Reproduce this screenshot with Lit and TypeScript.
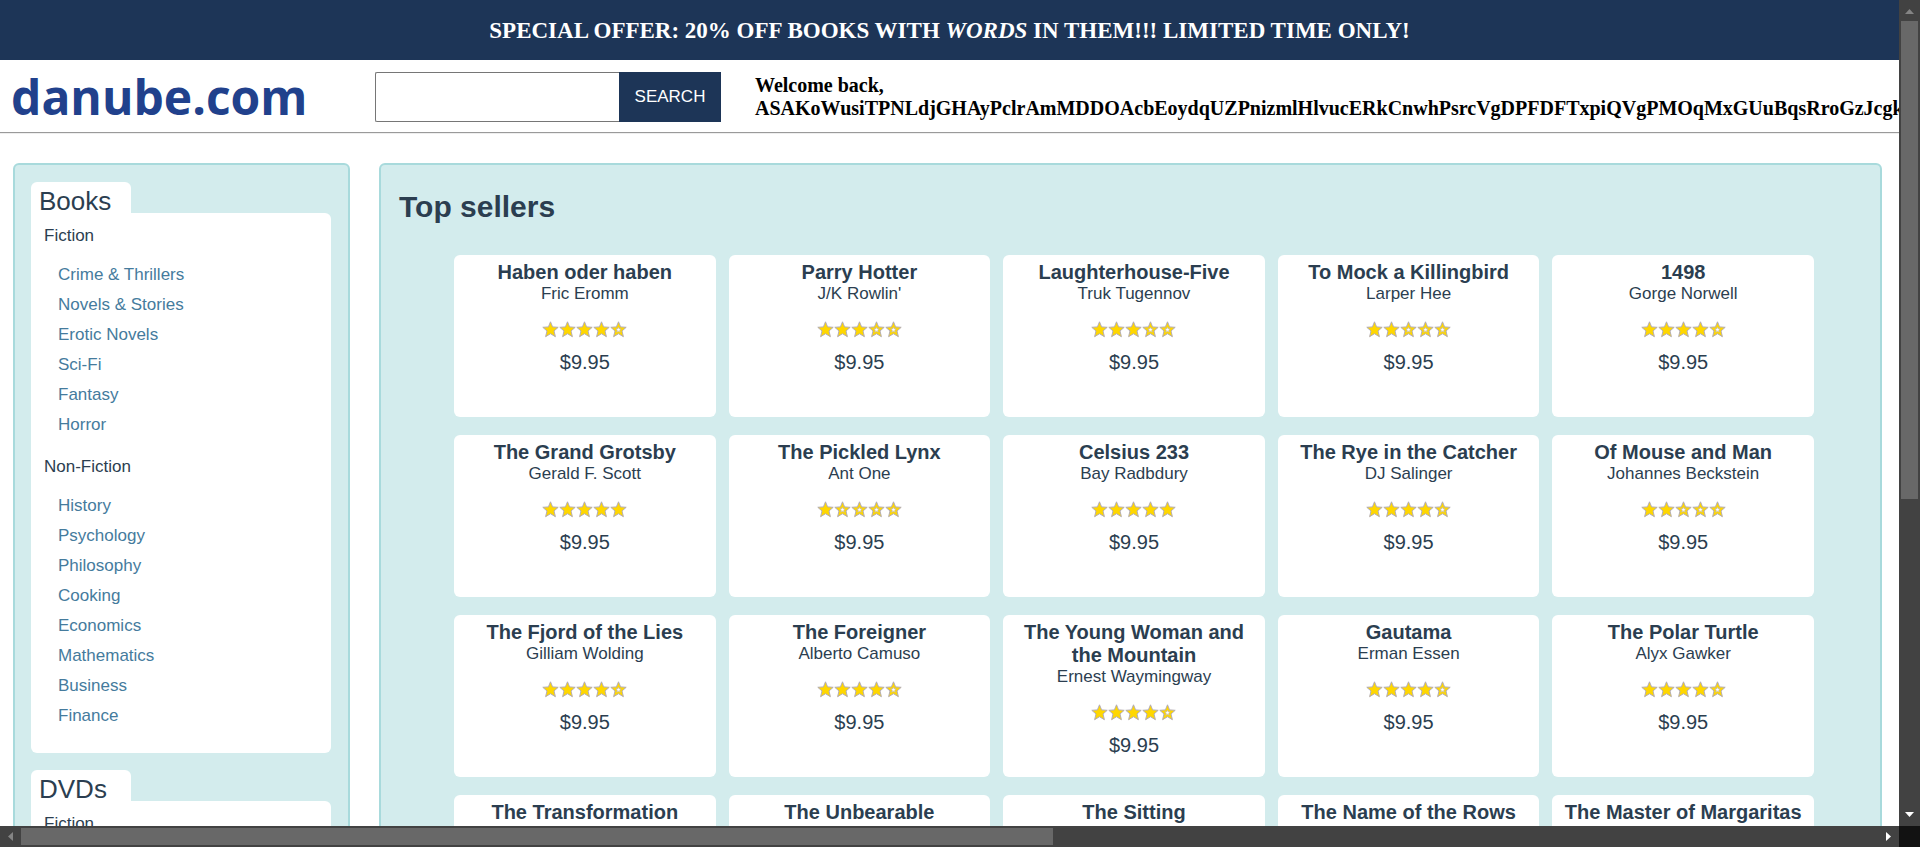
import { LitElement, html, css } from "lit";
import { customElement, property } from "lit/decorators.js";

interface Book {
  title: string;
  author: string;
  stars: number;
}

const BOOKS: Book[] = [
  { title: "Haben oder haben", author: "Fric Eromm", stars: 4 },
  { title: "Parry Hotter", author: "J/K Rowlin'", stars: 3 },
  { title: "Laughterhouse-Five", author: "Truk Tugennov", stars: 3 },
  { title: "To Mock a Killingbird", author: "Larper Hee", stars: 2 },
  { title: "1498", author: "Gorge Norwell", stars: 4 },
  { title: "The Grand Grotsby", author: "Gerald F. Scott", stars: 5 },
  { title: "The Pickled Lynx", author: "Ant One", stars: 1 },
  { title: "Celsius 233", author: "Bay Radbdury", stars: 5 },
  { title: "The Rye in the Catcher", author: "DJ Salinger", stars: 4 },
  { title: "Of Mouse and Man", author: "Johannes Beckstein", stars: 2 },
  { title: "The Fjord of the Lies", author: "Gilliam Wolding", stars: 4 },
  { title: "The Foreigner", author: "Alberto Camuso", stars: 4 },
  { title: "The Young Woman and the Mountain", author: "Ernest Waymingway", stars: 4 },
  { title: "Gautama", author: "Erman Essen", stars: 4 },
  { title: "The Polar Turtle", author: "Alyx Gawker", stars: 4 },
  { title: "The Transformation", author: "", stars: 0 },
  { title: "The Unbearable", author: "", stars: 0 },
  { title: "The Sitting", author: "", stars: 0 },
  { title: "The Name of the Rows", author: "", stars: 0 },
  { title: "The Master of Margaritas", author: "", stars: 0 },
];

const CATEGORIES = [
  {
    name: "Books",
    groups: [
      {
        name: "Fiction",
        items: ["Crime & Thrillers", "Novels & Stories", "Erotic Novels", "Sci-Fi", "Fantasy", "Horror"],
      },
      {
        name: "Non-Fiction",
        items: ["History", "Psychology", "Philosophy", "Cooking", "Economics", "Mathematics", "Business", "Finance"],
      },
    ],
  },
  { name: "DVDs", groups: [{ name: "Fiction", items: [] as string[] }] },
];

const STAR = "M8.5 0.8 L10.6 5.9 L16.2 6.3 L12 10 L13.4 15.7 L8.5 12.7 L3.6 15.7 L5 10 L0.8 6.3 L6.4 5.9 Z";
const HOLE = "M8.5 6 L9.3 7.8 L11.2 8 L9.8 9.3 L10.2 11.2 L8.5 10.2 L6.8 11.2 L7.2 9.3 L5.8 8 L7.7 7.8 Z";

@customElement("star-rating")
export class StarRating extends LitElement {
  @property({ type: Number }) value = 0;

  static styles = css`
    :host {
      display: flex;
      justify-content: center;
    }
    .star {
      display: block;
      width: 17px;
      height: 17px;
      flex: none;
    }
    .fill {
      fill: #ffd700;
      stroke: #b4adb4;
      stroke-width: 1;
    }
    .hole {
      fill: #fff;
      stroke: #c3b8a2;
      stroke-width: 0.8;
    }
  `;

  render() {
    return [0, 1, 2, 3, 4].map(
      (i) => html`<svg class="star" viewBox="0 0 17 17" aria-hidden="true">
        <path class="fill" d=${STAR} />
        <path class="hole" d=${i < this.value ? "" : HOLE} />
      </svg>`
    );
  }
}

@customElement("book-card")
export class BookCard extends LitElement {
  @property({ attribute: false }) book!: Book;

  static styles = css`
    :host {
      display: block;
      box-sizing: border-box;
      min-height: 162px;
      padding: 6px 10px 0;
      border-radius: 6px;
      background: #fff;
      text-align: center;
    }
    .title {
      margin: 0;
      font-size: 20px;
      line-height: 23px;
      font-weight: 700;
    }
    .author {
      margin: 0 0 17px;
      font-size: 17px;
      line-height: 20px;
    }
    .price {
      margin: 13px 0 0;
      font-size: 20px;
      line-height: 23px;
    }
  `;

  render() {
    const { title, author, stars } = this.book;
    return html`
      <h3 class="title">${title}</h3>
      ${author
        ? html`<p class="author">${author}</p>
            <star-rating .value=${stars}></star-rating>
            <p class="price">$9.95</p>`
        : null}
    `;
  }
}

@customElement("app-root")
export class AppRoot extends LitElement {
  static styles = css`
    :host {
      display: grid;
      grid-template: minmax(0, 1fr) 21px / minmax(0, 1fr) 21px;
      height: 100vh;
      background: #fff;
      color: #2b3e50;
      font-family: "Liberation Sans", Arial, sans-serif;
    }
    .page {
      overflow: hidden;
    }
    .banner {
      padding: 17px 16px 15px;
      background: #1d3557;
      color: #fff;
      text-align: center;
      font: 700 23px/28px "Liberation Serif", "Times New Roman", serif;
    }
    .header {
      display: flex;
      align-items: center;
      height: 73px;
      padding: 2px 0 0 11px;
      box-sizing: border-box;
      border-bottom: 1px solid #9a9a9a;
      box-shadow: 0 1px #eee;
    }
    .logo {
      flex: none;
      width: 364px;
      color: #21418c;
      font: 700 48px/60px "Open Sans", "Noto Sans", sans-serif;
      text-decoration: none;
    }
    .search {
      display: flex;
      flex: none;
      height: 50px;
      margin-right: 34px;
    }
    .query {
      box-sizing: border-box;
      width: 244px;
      border: 1px solid #767676;
      border-right: 0;
      border-radius: 2px 0 0 2px;
      padding: 0 8px;
      font: 17px "Liberation Sans", Arial, sans-serif;
      background: #fff;
    }
    .go {
      width: 102px;
      padding: 0;
      border: 0;
      background: #1d3557;
      color: #fff;
      font: 17px "Liberation Sans", Arial, sans-serif;
    }
    .welcome {
      margin: 0;
      color: #000;
      white-space: nowrap;
      font: 700 20px/23px "Liberation Serif", "Times New Roman", serif;
    }
    .columns {
      display: grid;
      grid-template-columns: 337px minmax(0, 1fr);
      gap: 29px;
      padding: 30px 17px 0 13px;
    }
    .box {
      border: 2px solid #a8dadc;
      border-radius: 6px;
      background: #d3eced;
    }
    .side {
      padding: 17px 17px 17px 16px;
    }
    .tab {
      box-sizing: border-box;
      width: 100px;
      margin: 0;
      padding: 8px 8px 0;
      border-radius: 6px 6px 0 0;
      background: #fff;
      font-size: 26px;
      line-height: 23px;
      font-weight: 400;
    }
    .panel {
      margin-bottom: 17px;
      padding: 8px 13px 10px;
      border-radius: 0 6px 6px 6px;
      background: #fff;
      font-size: 17px;
      line-height: 30px;
    }
    .group {
      margin: 0;
      font-size: 17px;
      font-weight: 400;
    }
    .list {
      list-style: none;
      margin: 9px 0 12px;
      padding: 0 0 0 14px;
    }
    .link {
      color: #457b9d;
      text-decoration: none;
    }
    .main {
      padding: 24px 66px 30px 73px;
    }
    .heading {
      margin: 0 0 31px -55px;
      font-size: 30px;
      line-height: 35px;
    }
    .grid {
      display: grid;
      grid-template-columns: repeat(5, minmax(0, 1fr));
      gap: 18px 13px;
    }
    .bar {
      display: flex;
      align-items: center;
      justify-content: space-between;
      background: #424242;
    }
    .vertical {
      flex-direction: column;
    }
    .thumb {
      background: #686868;
    }
    .track {
      display: flex;
      flex: 1;
    }
    .vertical .track {
      flex-direction: column;
    }
    .vertical .thumb {
      width: 17px;
      height: 61%;
    }
    .horizontal .thumb {
      width: 55.6%;
      height: 17px;
    }
    .arrow {
      display: block;
      width: 21px;
      height: 21px;
      fill: #fff;
    }
    .off {
      fill: #848484;
    }
    .corner {
      background: #121212;
    }
  `;

  render() {
    return html`
      <div class="page">
        <div class="banner">
          SPECIAL OFFER: 20% OFF BOOKS WITH <em>WORDS</em> IN THEM!!! LIMITED TIME ONLY!
        </div>
        <header class="header">
          <a class="logo" href="#">danube.com</a>
          <form class="search">
            <input class="query" type="text" aria-label="Search" />
            <button class="go" type="button">SEARCH</button>
          </form>
          <p class="welcome">
            Welcome back,<br />ASAKoWusiTPNLdjGHAyPclrAmMDDOAcbEoydqUZPnizmlHlvucERkCnwhPsrcVgDPFDFTxpiQVgPMOqMxGUuBqsRroGzJcgk
          </p>
        </header>
        <div class="columns">
          <nav class="box side">
            ${CATEGORIES.map(
              (c) => html`<h2 class="tab">${c.name}</h2>
                <div class="panel">
                  ${c.groups.map(
                    (g) => html`<h3 class="group">${g.name}</h3>
                      <ul class="list">
                        ${g.items.map((i) => html`<li><a class="link" href="#">${i}</a></li>`)}
                      </ul>`
                  )}
                </div>`
            )}
          </nav>
          <main class="box main">
            <h2 class="heading">Top sellers</h2>
            <div class="grid">${BOOKS.map((b) => html`<book-card .book=${b}></book-card>`)}</div>
          </main>
        </div>
      </div>
      <div class="bar vertical">
        <svg class="arrow off" viewBox="0 0 21 21"><path d="M6 14 L10.5 9 L15 14 Z" /></svg>
        <div class="track"><div class="thumb"></div></div>
        <svg class="arrow" viewBox="0 0 21 21"><path d="M6 7 L10.5 12 L15 7 Z" /></svg>
      </div>
      <div class="bar horizontal">
        <svg class="arrow off" viewBox="0 0 21 21"><path d="M13 6 L8 10.5 L13 15 Z" /></svg>
        <div class="track"><div class="thumb"></div></div>
        <svg class="arrow" viewBox="0 0 21 21"><path d="M8 6 L13 10.5 L8 15 Z" /></svg>
      </div>
      <div class="corner"></div>
    `;
  }
}
